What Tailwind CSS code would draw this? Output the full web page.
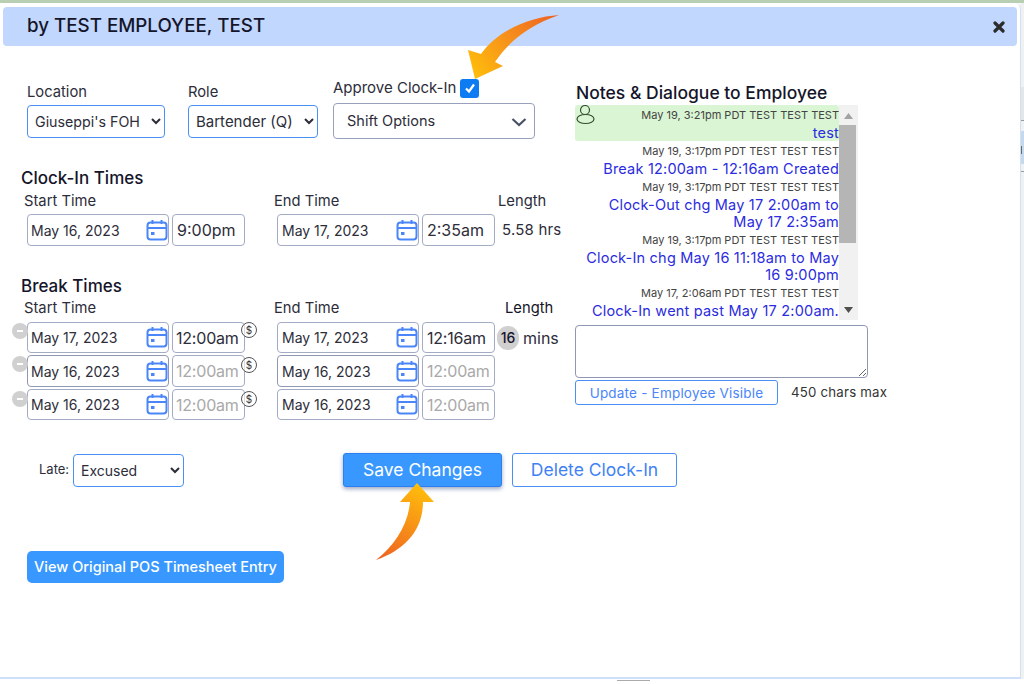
<!DOCTYPE html>
<html lang="en">
<head>
    <meta charset="UTF-8">
    <title>Edit Clock-In</title>
    <script src="https://cdn.jsdelivr.net/npm/@tailwindcss/browser@4"></script>
</head>
<body class="w-[1024px] h-[684px] overflow-hidden relative bg-white font-['Inter','Noto_Sans',sans-serif] text-[#2d2d3a]">
    <!-- page behind the modal -->
    <div class="absolute top-0 left-0 w-full h-[3px] bg-[#b9cfb4]"></div>
    <div class="absolute top-[3px] right-0 w-[4px] h-[676px] bg-[#f1f1f1]">
        <div class="mt-[84px] h-[34px] bg-[#e6e6e6] border-b border-[#999]"></div>
        <div class="relative mt-[10px] h-[33px] bg-[#c6d9ea]">
            <div class="absolute top-[15px] left-0 w-[2px] h-[8px] bg-[#666]"></div>
        </div>
        <div class="mt-[7px] h-[1px] bg-[#999]"></div>
    </div>

    <div class="relative w-[1021px] h-[676px] mt-[3px] bg-white rounded-tr-md border-r border-b-2 border-[#cfe0fb] overflow-hidden">
        <!-- header -->
        <div class="mt-[4px] ml-[3px] w-[1014px] h-[39px] bg-[#c1d7fd] rounded-sm flex items-center justify-between pl-[24px] pr-[12px]">
            <h1 class="text-[18.75px] font-medium text-[#15152a]">by TEST EMPLOYEE, TEST</h1>
            <svg class="w-[12px] h-[12px]" viewBox="0 0 12 12"><path d="M2 2 L10 10 M10 2 L2 10" stroke="#2b2b2b" stroke-width="3.2" stroke-linecap="round"/></svg>
        </div>

        <div class="flex h-[374px]">
            <!-- left side -->
            <div class="w-[575px] shrink-0">
                <div class="flex items-end h-[93px] pl-[27px]">
                    <div class="w-[138px] mb-[1px]">
                        <div class="h-[24px] text-[14.75px]">Location</div>
                        <select class="w-full h-[33px] pl-[3px] bg-white border border-[#4a8ff5] rounded-[4px] text-[14.25px]"><option>Giuseppi's FOH</option></select>
                    </div>
                    <div class="w-[130px] ml-[23px] mb-[1px]">
                        <div class="h-[24px] text-[14.75px]">Role</div>
                        <select class="w-full h-[33px] pl-[3px] bg-white border border-[#4a8ff5] rounded-[4px] text-[15px]"><option>Bartender (Q)</option></select>
                    </div>
                    <div class="w-[202px] ml-[15px]">
                        <div class="flex items-center h-[28px] pb-[2px] text-[15px]">
                            Approve Clock-In
                            <span class="ml-[4px] w-[19px] h-[19px] rounded-[3px] bg-[#0d7bf2] flex items-center justify-center">
                                <svg class="w-[14px] h-[14px]" viewBox="0 0 14 14"><path d="M3 7.5 L6 10.5 L11 3.5" fill="none" stroke="#fff" stroke-width="2.2"/></svg>
                            </span>
                        </div>
                        <div class="relative h-[36px] border border-[#98a0bb] rounded-[4px] flex items-center pl-[13px] text-[14.5px]">
                            Shift Options
                            <svg class="absolute right-[6px] top-[9px] w-[18px] h-[18px]" viewBox="0 0 18 18"><path d="M2.5 6 L9 12 L15.5 6" fill="none" stroke="#4a5068" stroke-width="2.2"/></svg>
                        </div>
                    </div>
                </div>

                <!-- clock-in times -->
                <h2 class="mt-[28px] ml-[21px] h-[22px] leading-[22px] text-[17px] font-medium text-[#15152a]">Clock-In Times</h2>
                <div class="flex pl-[24px] h-[25px] pt-[3px] text-[14.75px] leading-[18px]">
                    <div class="w-[250px]">Start Time</div>
                    <div class="w-[224px]">End Time</div>
                    <div>Length</div>
                </div>
                <div class="flex pl-[27px] items-center">
                    <div class="relative w-[142px] h-[32px]">
                        <input value="May 16, 2023" class="w-full h-full pl-[3px] border border-[#a4abc4] rounded-[4px] text-[14px]">
                        <svg class="absolute right-[1px] top-[5px] w-[22px] h-[22px]" viewBox="0 0 22 22"><rect x="1.5" y="3.5" width="19" height="17" rx="3" fill="none" stroke="#4a86f7" stroke-width="2"/><path d="M1.5 9 H20.5 M6.5 1 V5 M15.5 1 V5" stroke="#4a86f7" stroke-width="2"/><rect x="5" y="13" width="3.5" height="3" fill="#4a86f7"/></svg>
                    </div>
                    <input value="9:00pm" class="ml-[3px] w-[73px] h-[32px] pl-[4px] border border-[#a4abc4] rounded-[4px] text-[16px]">
                    <div class="relative w-[142px] h-[32px] ml-[32px]">
                        <input value="May 17, 2023" class="w-full h-full pl-[4px] border border-[#a4abc4] rounded-[4px] text-[14px]">
                        <svg class="absolute right-[1px] top-[5px] w-[22px] h-[22px]" viewBox="0 0 22 22"><rect x="1.5" y="3.5" width="19" height="17" rx="3" fill="none" stroke="#4a86f7" stroke-width="2"/><path d="M1.5 9 H20.5 M6.5 1 V5 M15.5 1 V5" stroke="#4a86f7" stroke-width="2"/><rect x="5" y="13" width="3.5" height="3" fill="#4a86f7"/></svg>
                    </div>
                    <input value="2:35am" class="ml-[3px] w-[73px] h-[32px] pl-[4px] border border-[#a4abc4] rounded-[4px] text-[16px]">
                    <span class="ml-[7px] text-[15px] tracking-[0.2px]">5.58 hrs</span>
                </div>

                <!-- break times -->
                <h2 class="mt-[29px] ml-[21px] h-[22px] leading-[22px] text-[17px] font-medium text-[#15152a]">Break Times</h2>
                <div class="flex pl-[24px] h-[25px] pt-[2px] text-[14.75px] leading-[18px]">
                    <div class="w-[250px]">Start Time</div>
                    <div class="w-[231px]">End Time</div>
                    <div class="text-[#15152a]">Length</div>
                </div>
                <div class="flex flex-col gap-[2px] pl-[27px]">
                    <div class="flex items-center relative">
                        <span class="absolute left-[-15px] top-[1px] w-[16px] h-[16px] z-10 rounded-full bg-[#d0d0d0] flex items-center justify-center"><span class="w-[6px] h-[2px] bg-white"></span></span>
                        <div class="relative w-[142px] h-[31px]">
                            <input value="May 17, 2023" class="w-full h-full pl-[3px] border border-[#a4abc4] rounded-[4px] text-[14px]">
                            <svg class="absolute right-[1px] top-[4px] w-[22px] h-[22px]" viewBox="0 0 22 22"><rect x="1.5" y="3.5" width="19" height="17" rx="3" fill="none" stroke="#4a86f7" stroke-width="2"/><path d="M1.5 9 H20.5 M6.5 1 V5 M15.5 1 V5" stroke="#4a86f7" stroke-width="2"/><rect x="5" y="13" width="3.5" height="3" fill="#4a86f7"/></svg>
                        </div>
                        <input value="12:00am" class="ml-[3px] w-[73px] h-[31px] pl-[3px] border border-[#a4abc4] rounded-[4px] text-[16px] tracking-[-0.2px]">
                        <span class="absolute left-[214px] top-[0px] w-[16px] h-[16px] rounded-full border border-[#555] bg-white/60 flex items-center justify-center text-[10px] leading-none text-[#333]">$</span>
                        <div class="relative w-[142px] h-[31px] ml-[32px]">
                            <input value="May 17, 2023" class="w-full h-full pl-[4px] border border-[#a4abc4] rounded-[4px] text-[14px]">
                            <svg class="absolute right-[1px] top-[4px] w-[22px] h-[22px]" viewBox="0 0 22 22"><rect x="1.5" y="3.5" width="19" height="17" rx="3" fill="none" stroke="#4a86f7" stroke-width="2"/><path d="M1.5 9 H20.5 M6.5 1 V5 M15.5 1 V5" stroke="#4a86f7" stroke-width="2"/><rect x="5" y="13" width="3.5" height="3" fill="#4a86f7"/></svg>
                        </div>
                        <input value="12:16am" class="ml-[3px] w-[73px] h-[31px] pl-[4px] border border-[#a4abc4] rounded-[4px] text-[16px] tracking-[-0.2px]">
                        <span class="ml-[2px] w-[22px] h-[24px] rounded-full bg-[#d0d0d0] flex items-center justify-center text-[14px] font-medium text-[#15152a]">16</span>
                        <span class="ml-[4px] text-[16px]">mins</span>
                    </div>
                    <div class="flex items-center relative">
                        <span class="absolute left-[-15px] top-[1px] w-[16px] h-[16px] z-10 rounded-full bg-[#d0d0d0] flex items-center justify-center"><span class="w-[6px] h-[2px] bg-white"></span></span>
                        <div class="relative w-[142px] h-[32px]">
                            <input value="May 16, 2023" class="w-full h-full pl-[3px] border border-[#8f97b3] rounded-[4px] text-[14px]">
                            <svg class="absolute right-[1px] top-[5px] w-[22px] h-[22px]" viewBox="0 0 22 22"><rect x="1.5" y="3.5" width="19" height="17" rx="3" fill="none" stroke="#4a86f7" stroke-width="2"/><path d="M1.5 9 H20.5 M6.5 1 V5 M15.5 1 V5" stroke="#4a86f7" stroke-width="2"/><rect x="5" y="13" width="3.5" height="3" fill="#4a86f7"/></svg>
                        </div>
                        <input value="12:00am" class="ml-[3px] w-[73px] h-[32px] pl-[3px] border border-[#a4abc4] rounded-[4px] text-[16px] tracking-[-0.2px] text-[#a9a9a9]">
                        <span class="absolute left-[214px] top-[2px] w-[16px] h-[16px] rounded-full border border-[#555] bg-white/60 flex items-center justify-center text-[10px] leading-none text-[#333]">$</span>
                        <div class="relative w-[142px] h-[32px] ml-[32px]">
                            <input value="May 16, 2023" class="w-full h-full pl-[4px] border border-[#8f97b3] rounded-[4px] text-[14px]">
                            <svg class="absolute right-[1px] top-[5px] w-[22px] h-[22px]" viewBox="0 0 22 22"><rect x="1.5" y="3.5" width="19" height="17" rx="3" fill="none" stroke="#4a86f7" stroke-width="2"/><path d="M1.5 9 H20.5 M6.5 1 V5 M15.5 1 V5" stroke="#4a86f7" stroke-width="2"/><rect x="5" y="13" width="3.5" height="3" fill="#4a86f7"/></svg>
                        </div>
                        <input value="12:00am" class="ml-[3px] w-[73px] h-[32px] pl-[4px] border border-[#a4abc4] rounded-[4px] text-[16px] tracking-[-0.2px] text-[#a9a9a9]">
                    </div>
                    <div class="flex items-center relative">
                        <span class="absolute left-[-15px] top-[2px] w-[16px] h-[16px] z-10 rounded-full bg-[#d0d0d0] flex items-center justify-center"><span class="w-[6px] h-[2px] bg-white"></span></span>
                        <div class="relative w-[142px] h-[31px]">
                            <input value="May 16, 2023" class="w-full h-full pl-[3px] border border-[#a4abc4] rounded-[4px] text-[14px]">
                            <svg class="absolute right-[1px] top-[4px] w-[22px] h-[22px]" viewBox="0 0 22 22"><rect x="1.5" y="3.5" width="19" height="17" rx="3" fill="none" stroke="#4a86f7" stroke-width="2"/><path d="M1.5 9 H20.5 M6.5 1 V5 M15.5 1 V5" stroke="#4a86f7" stroke-width="2"/><rect x="5" y="13" width="3.5" height="3" fill="#4a86f7"/></svg>
                        </div>
                        <input value="12:00am" class="ml-[3px] w-[73px] h-[31px] pl-[3px] border border-[#a4abc4] rounded-[4px] text-[16px] tracking-[-0.2px] text-[#a9a9a9]">
                        <span class="absolute left-[214px] top-[2px] w-[16px] h-[16px] rounded-full border border-[#555] bg-white/60 flex items-center justify-center text-[10px] leading-none text-[#333]">$</span>
                        <div class="relative w-[142px] h-[31px] ml-[32px]">
                            <input value="May 16, 2023" class="w-full h-full pl-[4px] border border-[#a4abc4] rounded-[4px] text-[14px]">
                            <svg class="absolute right-[1px] top-[4px] w-[22px] h-[22px]" viewBox="0 0 22 22"><rect x="1.5" y="3.5" width="19" height="17" rx="3" fill="none" stroke="#4a86f7" stroke-width="2"/><path d="M1.5 9 H20.5 M6.5 1 V5 M15.5 1 V5" stroke="#4a86f7" stroke-width="2"/><rect x="5" y="13" width="3.5" height="3" fill="#4a86f7"/></svg>
                        </div>
                        <input value="12:00am" class="ml-[3px] w-[73px] h-[31px] pl-[4px] border border-[#a4abc4] rounded-[4px] text-[16px] tracking-[-0.2px] text-[#a9a9a9]">
                    </div>
                </div>
            </div>

            <!-- notes -->
            <div class="w-[313px] shrink-0 pt-[37px]">
                <h2 class="h-[22px] ml-[1px] leading-[20px] text-[17.5px] font-medium text-[#15152a] whitespace-nowrap">Notes &amp; Dialogue to Employee</h2>
                <div class="flex w-[283px] h-[215px] overflow-hidden">
                    <div class="w-[264px] shrink-0 text-right">
                        <div class="relative h-[36px] bg-[#d9f5d3] rounded-[3px]">
                            <svg class="absolute left-[1px] top-[0px] w-[19px] h-[20px]" viewBox="0 0 19 20"><circle cx="9" cy="5" r="4.5" fill="none" stroke="#33502f" stroke-width="1.2"/><ellipse cx="9.5" cy="14" rx="8.5" ry="4.5" fill="none" stroke="#33502f" stroke-width="1.2"/></svg>
                            <div class="h-[19px] leading-[20px] text-[11px] text-[#444]">May 19, 3:21pm PDT TEST TEST TEST</div>
                            <div class="leading-[17px] text-[14.5px] tracking-[0.2px] text-[#2b2be0]">test</div>
                        </div>
                        <div>
                            <div class="h-[19px] leading-[20px] text-[11px] text-[#444]">May 19, 3:17pm PDT TEST TEST TEST</div>
                            <div class="leading-[17px] text-[14.5px] tracking-[0.2px] text-[#2b2be0]">Break 12:00am - 12:16am Created</div>
                        </div>
                        <div>
                            <div class="h-[19px] leading-[20px] text-[11px] text-[#444]">May 19, 3:17pm PDT TEST TEST TEST</div>
                            <div class="leading-[17px] text-[14.5px] tracking-[0.2px] text-[#2b2be0]">Clock-Out chg May 17 2:00am to<br>May 17 2:35am</div>
                        </div>
                        <div>
                            <div class="h-[19px] leading-[20px] text-[11px] text-[#444]">May 19, 3:17pm PDT TEST TEST TEST</div>
                            <div class="leading-[17px] text-[14.5px] tracking-[0.2px] text-[#2b2be0] whitespace-nowrap">Clock-In chg May 16 11:18am to May<br>16 9:00pm</div>
                        </div>
                        <div>
                            <div class="h-[19px] leading-[20px] text-[11px] text-[#444]">May 17, 2:06am PDT TEST TEST TEST</div>
                            <div class="leading-[17px] text-[14.5px] tracking-[0.2px] text-[#2b2be0] whitespace-nowrap">Clock-In went past May 17 2:00am.</div>
                        </div>
                    </div>
                    <!-- scrollbar -->
                    <div class="relative w-[19px] shrink-0 bg-[#f1f1f1]">
                        <svg class="absolute left-[5px] top-[8px] w-[9px] h-[6px]" viewBox="0 0 9 6"><path d="M4.5 0 L9 6 H0 Z" fill="#a3a3a3"/></svg>
                        <div class="absolute left-0 top-[20px] w-[17px] h-[118px] bg-[#b5b5b5]"></div>
                        <svg class="absolute left-[5px] top-[202px] w-[9px] h-[6px]" viewBox="0 0 9 6"><path d="M0 0 H9 L4.5 6 Z" fill="#505050"/></svg>
                    </div>
                </div>
                <textarea class="block mt-[5px] w-[293px] h-[53px] border border-[#8f97b3] rounded-[4px]"></textarea>
                <div class="flex items-center mt-[2px]">
                    <button class="w-[203px] h-[25px] pt-[1px] border border-[#4a8ff5] rounded-[3px] text-[13.5px] text-[#4a86f7] tracking-[0.2px]">Update - Employee Visible</button>
                    <span class="ml-[13px] pt-[1px] text-[13.25px] text-[#333] tracking-[0.2px]">450 chars max</span>
                </div>
            </div>
        </div>

        <!-- late and save row -->
        <div class="flex items-center mt-[33px] h-[34px]">
            <span class="ml-[39px] w-[30px] text-[13px]">Late:</span>
            <select class="ml-[4px] w-[111px] h-[33px] pl-[3px] bg-white border border-[#4a8ff5] rounded-[4px] text-[14px]"><option>Excused</option></select>
            <button class="ml-[159px] w-[159px] h-[34px] pt-[1px] bg-[#3898ff] border border-[#2b7ff0] rounded-[3px] shadow-[0_2px_4px_rgba(40,60,120,0.45)] text-white text-[17.5px]">Save Changes</button>
            <button class="ml-[10px] w-[165px] h-[34px] pt-[1px] bg-white border border-[#4a8ff5] rounded-[3px] text-[#3f82f5] text-[17.5px]">Delete Clock-In</button>
        </div>

        <button class="block mt-[64px] ml-[27px] w-[257px] h-[32px] bg-[#3898ff] rounded-[5px] text-white text-[14.5px] font-medium whitespace-nowrap">View Original POS Timesheet Entry</button>
    </div>

    <!-- bottom strip -->
    <div class="absolute left-[617px] top-[680px] w-[33px] h-[1px] bg-[#aaa]"></div>

    <!-- callout arrows on top of the page -->
    <svg class="absolute left-0 top-0 w-[1024px] h-[684px] pointer-events-none" viewBox="0 0 1024 684">
        <defs>
            <linearGradient id="arrowTop" x1="559" y1="15" x2="475" y2="79" gradientUnits="userSpaceOnUse">
                <stop offset="0" stop-color="#ee5f22"/><stop offset="0.45" stop-color="#f58a1c"/><stop offset="1" stop-color="#ffbe0b"/>
            </linearGradient>
            <linearGradient id="arrowBottom" x1="417" y1="483" x2="376" y2="560" gradientUnits="userSpaceOnUse">
                <stop offset="0" stop-color="#ffbe0b"/><stop offset="1" stop-color="#ee5f22"/>
            </linearGradient>
        </defs>
        <path d="M559 15 C530 17 498 30 481 54 L468 50 L475 79 L503 66 L495 62 C510 40 530 25 559 15 Z" fill="url(#arrowTop)"/>
        <path d="M417 483 L434 502 L423 502 C423 530 405 550 376 560 C395 545 408 525 410 502 L400 502 Z" fill="url(#arrowBottom)"/>
    </svg>
</body>
</html>
